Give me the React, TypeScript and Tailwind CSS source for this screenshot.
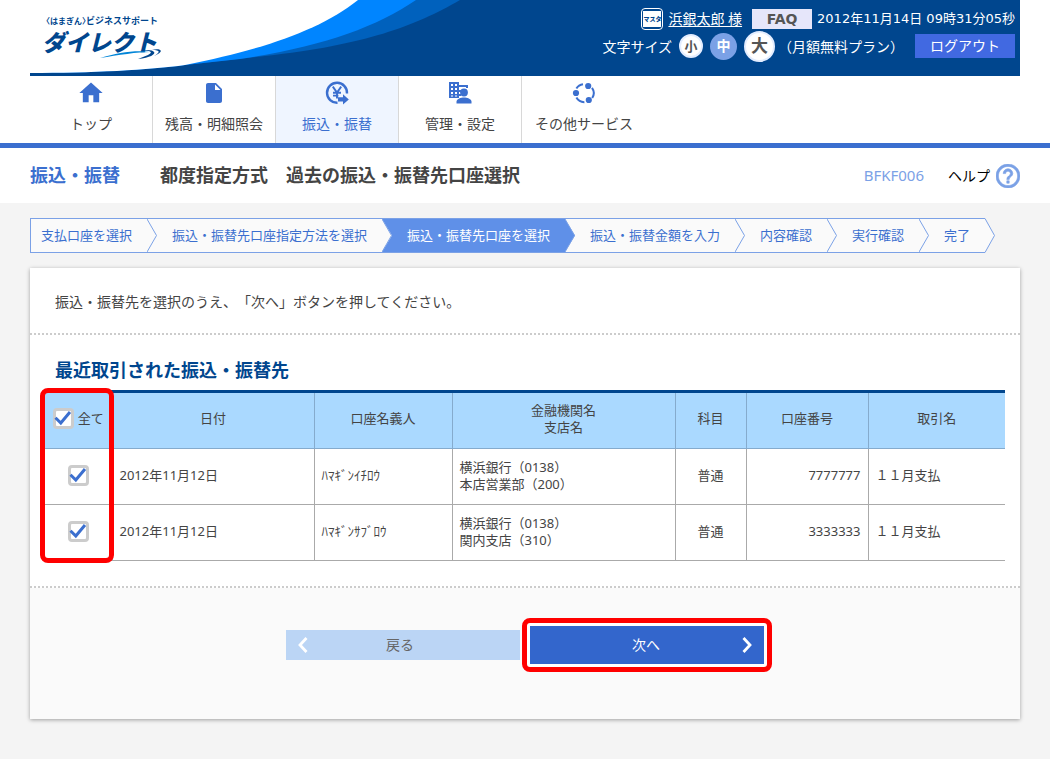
import { useState } from "react";
import type { ReactNode } from "react";
import { MdHome, MdInsertDriveFile, MdHelpOutline } from "react-icons/md";

function TransferIcon() {
  return (
    <svg viewBox="0 0 24 24" className="size-6" fill="none" stroke="currentColor">
      <path d="M12.5 21.8A10 10 0 1 1 22 12.5" strokeWidth="2.4" />
      <path d="M7.8 5.6l4.2 6L16.2 5.600M12 11v6.500M8 11.800h8M8 14.600h5.400" strokeWidth="1.9" />
      <path d="M13 16.300h5v-3.100l5.800 5.200-5.800 5.200v-3.100h-5z" fill="currentColor" stroke="none" />
    </svg>
  );
}

function ManageIcon() {
  return (
    <svg viewBox="0 0 24 24" className="size-6" fill="currentColor">
      <path
        fillRule="evenodd"
        d="M1 1h10v3h9v3h-2V6h-7v3h3v2h-3v2h2v2h-2v2H1zM3 3v2h2V3zm4 0v2h2V3zM3 7v2h2V7zm4 0v2h2V7zm-4 4v2h2v-2zm4 0v2h2v-2zm-4 3.5v1h2v-1zm4 0v1h2v-1z"
      />
      <circle cx="16" cy="11.5" r="3.9" />
      <path d="M8.5 22.5v-1.8c0-2.8 4.5-4.2 7.5-4.2s7.5 1.4 7.5 4.2v1.8z" />
    </svg>
  );
}

function OtherIcon() {
  return (
    <svg viewBox="0 0 24 24" className="size-6" fill="none" stroke="currentColor" strokeWidth="2">
      <path d="M4.4 7.600A9 9 0 0 1 11 3.300M20 6.800a9 9 0 0 1 .2 10.200M12.400 21.200a9 9 0 0 1-8-4.600" />
      <g fill="currentColor" stroke="none">
        <circle cx="4" cy="12" r="3.1" />
        <circle cx="16.2" cy="5" r="3.1" />
        <circle cx="16.8" cy="19" r="3.1" />
      </g>
    </svg>
  );
}

const navItems: { label: string; icon: ReactNode; active?: boolean }[] = [
  { label: "トップ", icon: <MdHome className="size-7" /> },
  { label: "残高・明細照会", icon: <MdInsertDriveFile className="size-6" /> },
  { label: "振込・振替", icon: <TransferIcon />, active: true },
  { label: "管理・設定", icon: <ManageIcon /> },
  { label: "その他サービス", icon: <OtherIcon /> },
];

const steps = [
  "支払口座を選択",
  "振込・振替先口座指定方法を選択",
  "振込・振替先口座を選択",
  "振込・振替金額を入力",
  "内容確認",
  "実行確認",
  "完了",
];
const currentStep = 2;

const rows = [
  { date: "2012年11月12日", holder: "ﾊﾏｷﾞﾝｲﾁﾛｳ", bank: "横浜銀行（0138）", branch: "本店営業部（200）", kind: "普通", number: "7777777", name: "１１月支払" },
  { date: "2012年11月12日", holder: "ﾊﾏｷﾞﾝｻﾌﾞﾛｳ", bank: "横浜銀行（0138）", branch: "関内支店（310）", kind: "普通", number: "3333333", name: "１１月支払" },
];

function StepEdge({ left, right }: { left: string; right: string }) {
  return (
    <svg viewBox="0 0 10 33" className="h-[33px] w-[10px] shrink-0">
      <rect width="10" height="33" fill={right} />
      <path d="M0 0L10 16.5L0 33z" fill={left} />
      <path d="M0 0L9.5 16.5L0 33" fill="none" stroke="#7ba1e6" />
    </svg>
  );
}

function CheckBox({ id, label, checked, onChange }: { id: string; label?: string; checked: boolean; onChange: () => void }) {
  return (
    <span className="inline-grid align-middle">
      <input
        id={id}
        type="checkbox"
        aria-label={label}
        checked={checked}
        onChange={onChange}
        className="peer col-start-1 row-start-1 size-[21px] appearance-none rounded border-3 border-[#ccc] bg-white"
      />
      <svg viewBox="0 0 21 21" className="pointer-events-none invisible col-start-1 row-start-1 size-[21px] peer-checked:visible">
        <path d="M2.5 9.8L7.8 15L17 4" fill="none" stroke="#3b6fcf" strokeWidth="3" />
      </svg>
    </span>
  );
}

function Header() {
  return (
    <header className="relative mx-[30px] flex h-[76px] justify-between bg-[#00468e]">
      <svg viewBox="0 0 450 76" className="absolute top-0 left-0 h-[76px] w-[450px]">
        <path d="M0 0H430C385 26 335 45 235 56L155 65C120 70 60 73 0 73z" fill="#0061bd" />
        <path d="M0 0H386C345 28 290 47 210 59L155 65C120 70 60 73 0 73z" fill="#0085ff" />
        <path d="M0 0H328C290 30 235 49 155 65C120 70 60 73 0 73z" fill="#fff" />
      </svg>
      <a href="#top" className="relative mt-[14px] ml-3 block h-12 text-[#00468e]">
        <span className="block pl-1 text-[9px] leading-[14px] font-bold whitespace-nowrap">
          <span className="text-[8px] [font-feature-settings:'halt']">〈はまぎん〉</span>ビジネスサポート
        </span>
        <span className="block text-[23px] leading-7 font-black whitespace-nowrap italic">ダイレクト</span>
        <svg viewBox="0 0 62 12" className="absolute top-[35px] left-[58px] h-3 w-[62px]">
          <path d="M0 9C18 4 34 1 50 3C38 3 18 6 0 9z" fill="#0085d8" />
          <path d="M41 2C50 1 54 3 48 6L38 10C50 9 56 5 54 3C53 1 47 0 41 2z" fill="#00468e" />
          <path d="M52 1C60 1 61 3 54 7C66 2 60-1 52 1z" fill="#00468e" />
        </svg>
      </a>
      <div className="relative flex flex-col items-end pt-2 pr-[5px] text-[14px] text-white">
        <div className="flex h-[22px] items-center">
          <span className="flex h-[22px] w-[22px] items-center justify-center rounded border border-white bg-[#00468e] p-px">
            <span className="flex h-4 items-center bg-white text-[6px] leading-4 font-black text-[#00468e]">マスタ</span>
          </span>
          <a href="#user" className="ml-[5px] leading-5 underline underline-offset-2">浜銀太郎 様</a>
          <button type="button" className="ml-[10px] h-5 w-[60px] bg-[#e6e6fa] font-['DejaVu_Sans'] text-[14px] leading-5 font-bold text-[#555]">FAQ</button>
          <time className="ml-[5px] font-['DejaVu_Sans','Noto_Sans_CJK_JP',sans-serif] text-[13px]">2012年11月14日 09時31分05秒</time>
        </div>
        <div className="flex h-8 items-center">
          <span>文字サイズ</span>
          <button type="button" className="ml-[7px] size-6 rounded-full border-2 border-[#e3edff] bg-white text-[13px] leading-5 font-bold text-[#555]">小</button>
          <button type="button" className="ml-[7px] size-[27px] rounded-full bg-[#7ba1e6] text-[14px] leading-6 font-bold text-white">中</button>
          <button type="button" className="ml-[7px] size-[31px] rounded-full border-2 border-[#e3edff] bg-white text-[17px] leading-6 font-bold text-[#555]">大</button>
          <span className="ml-[3px]">（月額無料プラン）</span>
          <button type="button" className="ml-[11px] h-6 w-[100px] bg-[#4169e1] text-[14px] leading-6">ログアウト</button>
        </div>
      </div>
    </header>
  );
}

export default function App() {
  const [selected, setSelected] = useState<boolean[]>(rows.map(() => true));
  const all = selected.every(Boolean);

  return (
    <div className="min-h-screen bg-[#f4f4f4] font-['Noto_Sans','Noto_Sans_CJK_JP',sans-serif] text-[14px] text-[#444] [text-spacing-trim:space-all]">
      <div className="bg-white">
        <Header />
        <nav className="border-b-5 border-[#3b6fcf] px-[30px]">
          <ul className="flex">
            {navItems.map((item) => (
              <li key={item.label} className="w-[123px] border-r border-[#d8d8d8] last:w-[124px] last:border-r-0">
                <a
                  href="#nav"
                  className={`flex h-[67px] flex-col items-center ${item.active ? "bg-[#eff5ff] text-[#3b6fcf]" : ""}`}
                >
                  <span className="flex h-[34px] items-center text-[#3b6fcf]">{item.icon}</span>
                  <span className="leading-7 whitespace-nowrap">{item.label}</span>
                </a>
              </li>
            ))}
          </ul>
        </nav>
        <div className="flex h-[55px] items-center px-[30px]">
          <p className="text-[18px] font-bold text-[#3b6fcf]">振込・振替</p>
          <h1 className="ml-10 text-[18px] font-bold">都度指定方式　過去の振込・振替先口座選択</h1>
          <span className="ml-auto text-[15px] text-[#7ba1e6]">BFKF006</span>
          <a href="#help" className="ml-6 flex items-center gap-[6px] text-black">
            ヘルプ
            <MdHelpOutline viewBox="2 2 20 20" strokeWidth="0.5" className="size-6 text-[#7ba1e6]" />
          </a>
        </div>
      </div>

      <main className="px-[30px] pt-[15px] pb-10">
        <ol className="flex text-[13px] text-[#3b6fcf]">
          {steps.map((step, i) => {
            const active = i === currentStep;
            return (
              <li
                key={step}
                aria-current={active ? "step" : undefined}
                className={`flex h-[35px] items-center border-y border-[#7ba1e6] whitespace-nowrap first:border-l ${
                  active ? "bg-[#5f90e8] text-white" : "bg-[#fafafa]"
                }`}
              >
                {i > 0 && (
                  <StepEdge left={i - 1 === currentStep ? "#5f90e8" : "#fafafa"} right={active ? "#5f90e8" : "#fafafa"} />
                )}
                <span className={i === 0 ? "pr-[15px] pl-[10px]" : "px-[15px]"}>{step}</span>
              </li>
            );
          })}
          <li aria-hidden="true">
            <svg viewBox="0 0 10 35" className="h-[35px] w-[10px]">
              <path d="M0 .5L9.5 17.5L0 34.5" fill="#fafafa" stroke="#7ba1e6" />
            </svg>
          </li>
        </ol>

        <section className="mt-[15px] bg-white shadow-[0_1px_4px_rgba(0,0,0,0.35)]">
          <p className="border-b-2 border-dotted border-[#ccc] px-[25px] pt-5 pb-[18px] leading-[27px]">
            振込・振替先を選択のうえ、「次へ」ボタンを押してください。
          </p>
          <div className="border-b-2 border-dotted border-[#ccc] px-[15px] pb-[25px]">
            <h2 className="px-[10px] pt-[22px] pb-[6px] text-[18px] leading-[27px] font-bold text-[#00468e]">最近取引された振込・振替先</h2>
            <div className="relative">
              <table className="w-full table-fixed border-collapse text-[13px] leading-[17px]">
                <colgroup>
                  <col className="w-[67px]" />
                  <col className="w-[202px]" />
                  <col className="w-[138px]" />
                  <col />
                  <col className="w-[71px]" />
                  <col className="w-[122px]" />
                  <col className="w-[137px]" />
                </colgroup>
                <thead>
                  <tr className="h-[57px] border-t-3 border-b border-t-[#00468e] border-b-[#85abcd] bg-[#aad9ff] *:border-r *:border-[#85abcd] *:pb-1 *:font-normal *:last:border-r-0">
                    <th>
                      <span className="flex items-center justify-center gap-1">
                        <CheckBox id="all" checked={all} onChange={() => setSelected(rows.map(() => !all))} />
                        <label htmlFor="all">全て</label>
                      </span>
                    </th>
                    <th>日付</th>
                    <th>口座名義人</th>
                    <th>金融機関名<br />支店名</th>
                    <th>科目</th>
                    <th>口座番号</th>
                    <th>取引名</th>
                  </tr>
                </thead>
                <tbody>
                  {rows.map((row, i) => (
                    <tr key={row.number} className="h-14 border-b border-[#aaa] *:border-r *:border-[#aaa] *:px-[7px] *:pb-[2px] *:last:border-r-0">
                      <td className="text-center">
                        <CheckBox
                          id={`row-${i}`}
                          label={row.holder}
                          checked={selected[i]}
                          onChange={() => setSelected(selected.map((v, j) => (j === i ? !v : v)))}
                        />
                      </td>
                      <td>{row.date}</td>
                      <td>{row.holder}</td>
                      <td>{row.bank}<br />{row.branch}</td>
                      <td className="text-center">{row.kind}</td>
                      <td className="text-right">{row.number}</td>
                      <td>{row.name}</td>
                    </tr>
                  ))}
                </tbody>
              </table>
              <div className="pointer-events-none absolute -top-[2px] -bottom-[2px] -left-[5px] w-[74px] rounded-lg border-5 border-[#f00]" />
            </div>
          </div>
          <div className="flex items-center justify-center bg-[#fafafa] pt-[30px] pb-[47px] pl-[8px]">
            <button type="button" className="flex h-[30px] w-[234px] items-center bg-[#bbd5f5] px-3 text-[#666]">
              <svg viewBox="0 0 10 16" className="h-4 w-[10px]">
                <path d="M8.5 1L2 8l6.5 7" fill="none" stroke="#fff" strokeWidth="2.8" />
              </svg>
              <span className="flex-1 pr-4 pb-[2px]">戻る</span>
            </button>
            <div className="ml-[2px] rounded-lg border-5 border-[#f00] bg-white p-[3px]">
              <button type="button" className="flex h-[38px] w-[234px] items-center bg-[#36c] px-3 text-white">
                <span className="flex-1 pl-2 pb-[2px]">次へ</span>
                <svg viewBox="0 0 10 16" className="h-4 w-[10px]">
                  <path d="M1.5 1L8 8l-6.5 7" fill="none" stroke="#fff" strokeWidth="2.8" />
                </svg>
              </button>
            </div>
          </div>
        </section>
      </main>
    </div>
  );
}
